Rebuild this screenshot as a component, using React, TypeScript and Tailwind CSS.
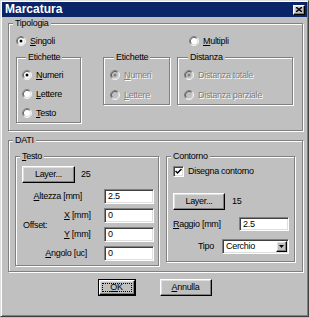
import React from "react";

const disabledText = "text-[#808080] [text-shadow:1px_1px_0_#fff]";

function Radio({ checked, disabled }: { checked?: boolean; disabled?: boolean }) {
  return (
    <svg width="10" height="10" viewBox="0 0 12 12" className="shrink-0">
      <circle cx="6" cy="6" r="4.5" fill={disabled ? "#c0c0c0" : "#fff"} />
      <path d="M2.11 9.89A5.5 5.5 0 0 1 9.89 2.11" fill="none" stroke="#808080" />
      <path d="M9.89 2.11A5.5 5.5 0 0 1 2.11 9.89" fill="none" stroke="#fff" />
      <path d="M2.82 9.18A4.5 4.5 0 0 1 9.18 2.82" fill="none" stroke="#404040" />
      <path d="M9.18 2.82A4.5 4.5 0 0 1 2.82 9.18" fill="none" stroke="#dfdfdf" />
      {checked && <circle cx="6" cy="6" r="1.8" fill={disabled ? "#808080" : "#000"} />}
    </svg>
  );
}

function Option({ label, u, checked, disabled }: any) {
  const rest = label.slice(1);
  return (
    <div className="flex items-center gap-[4px] h-[12px] whitespace-nowrap">
      <Radio checked={checked} disabled={disabled} />
      <span className={disabled ? disabledText : ""}>
        {u ? <span className="underline">{label[0]}</span> : label[0]}
        {rest}
      </span>
    </div>
  );
}

function Group({ label, className, children }: any) {
  return (
    <fieldset className={"border border-[#808080] shadow-[1px_1px_0_#fff,inset_1px_1px_0_#fff] " + className}>
      <legend className="ml-[4px] px-[2px] bg-[#c0c0c0] leading-[11px]">{label}</legend>
      {children}
    </fieldset>
  );
}

function Button({ children, className }: any) {
  return (
    <div
      className={
        "flex items-center justify-center border border-t-white border-l-white border-r-black border-b-black shadow-[inset_-1px_-1px_0_#808080,inset_1px_1px_0_#dfdfdf] " +
        className
      }
    >
      {children}
    </div>
  );
}

function Input({ value, className }: any) {
  return (
    <div
      className={
        "bg-white border border-t-[#808080] border-l-[#808080] border-r-white border-b-white shadow-[inset_1px_1px_0_#404040,inset_-1px_-1px_0_#dfdfdf] pl-[3px] flex items-center " +
        className
      }
    >
      {value}
    </div>
  );
}

export default function App() {
  return (
    <div className="w-[309px] h-[318px] bg-[#c0c0c0] font-['Liberation_Sans',Arial,sans-serif] text-[9px] leading-[11px] tracking-[-0.3px] text-black">
      <div className="w-[309px] h-[317px] border border-t-[#dfdfdf] border-l-[#dfdfdf] border-r-[#404040] border-b-[#404040] shadow-[inset_1px_1px_0_#fff,inset_-1px_-1px_0_#808080] p-[1px]">
        <div className="h-[15px] bg-[#0a2468] flex items-center justify-between pl-[3px] pr-[2px]">
          <span className="text-white font-bold text-[12px] leading-[15px] tracking-normal">Marcatura</span>
          <Button className="w-[12px] h-[10px] bg-[#c0c0c0]">
            <svg width="6" height="5" viewBox="0 0 6 5">
              <path d="M0 0L6 5M6 0L0 5" stroke="#000" strokeWidth="1.4" />
            </svg>
          </Button>
        </div>

        <div className="pl-[6px] mt-[1px]">
          <Group label="Tipologia" className="w-[295px] pb-[7px]">
            <div className="mt-[6px] flex pl-[7px]">
              <div className="w-[173px]">
                <Option label="Singoli" u checked />
              </div>
              <Option label="Multipli" u />
            </div>
            <div className="mt-[5px] flex items-start pl-[7px]">
              <Group label="Etichette" className="w-[65px] pl-[5px] pb-[3px]">
                <div className="mt-[6px] flex flex-col gap-[7px]">
                  <Option label="Numeri" u checked />
                  <Option label="Lettere" u />
                  <Option label="Testo" u />
                </div>
              </Group>
              <Group label="Etichette" className="ml-[22px] w-[67px] pl-[6px] pb-[3px]">
                <div className="mt-[6px] flex flex-col gap-[8px]">
                  <Option label="Numeri" u checked disabled />
                  <Option label="Lettere" u disabled />
                </div>
              </Group>
              <Group label="Distanza" className="ml-[7px] w-[116px] pl-[6px] pb-[3px]">
                <div className="mt-[6px] flex flex-col gap-[8px]">
                  <Option label="Distanza totale" checked disabled />
                  <Option label="Distanza parziale" disabled />
                </div>
              </Group>
            </div>
          </Group>

          <Group label="DATI" className="mt-[4px] w-[295px] pb-[5px]">
            <div className="mt-[5px] flex items-start pl-[6px]">
              <Group
                label={
                  <>
                    <span className="underline">T</span>esto
                  </>
                }
                className="w-[144px] pb-[4px]"
              >
                <div className="mt-[4px] flex items-center">
                  <Button className="ml-[6px] w-[53px] h-[17px]">Layer...</Button>
                  <span className="ml-[6px]">25</span>
                </div>
                <div className="mt-[6px] grid grid-cols-[48px_40px_50px] auto-rows-[15px] gap-y-[4px] items-center whitespace-nowrap">
                  <span className="col-span-2 text-right pr-[22px]">
                    <span className="underline">A</span>ltezza [mm]
                  </span>
                  <Input value="2.5" className="h-[15px]" />
                  <span className="row-span-2 pl-[7px] self-center">Offset:</span>
                  <span className="text-right pr-[15px]">
                    <span className="underline">X</span> [mm]
                  </span>
                  <Input value="0" className="h-[15px]" />
                  <span className="text-right pr-[15px]">
                    <span className="underline">Y</span> [mm]
                  </span>
                  <Input value="0" className="h-[15px]" />
                  <span className="col-span-2 text-right pr-[17px]">
                    <span className="underline">A</span>ngolo [uc]
                  </span>
                  <Input value="0" className="h-[15px]" />
                </div>
              </Group>

              <Group label="Contorno" className="ml-[7px] w-[129px] pb-[7px]">
                <div className="mt-[4px] flex items-center gap-[4px] pl-[6px] h-[11px]">
                  <div className="w-[11px] h-[11px] bg-white border border-t-[#808080] border-l-[#808080] border-r-white border-b-white shadow-[inset_1px_1px_0_#404040,inset_-1px_-1px_0_#dfdfdf] flex items-center justify-center">
                    <svg width="7" height="7" viewBox="0 0 7 7">
                      <path d="M0.5 3L2.5 5L6.5 1" fill="none" stroke="#000" strokeWidth="1.5" />
                    </svg>
                  </div>
                  <span>Disegna contorno</span>
                </div>
                <div className="mt-[16px] flex items-center pl-[6px]">
                  <Button className="w-[52px] h-[17px]">Layer...</Button>
                  <span className="ml-[7px]">15</span>
                </div>
                <div className="mt-[7px] flex items-center pl-[6px]">
                  <span className="w-[66px]">
                    <span className="underline">R</span>aggio [mm]
                  </span>
                  <Input value="2.5" className="w-[50px] h-[14px]" />
                </div>
                <div className="mt-[8px] flex items-center">
                  <span className="ml-[31px] w-[24px]">Tipo</span>
                  <div className="w-[67px] h-[15px] bg-white border border-t-[#808080] border-l-[#808080] border-r-white border-b-white shadow-[inset_1px_1px_0_#404040,inset_-1px_-1px_0_#dfdfdf] flex items-center justify-between pl-[3px] pr-[1px]">
                    <span>Cerchio</span>
                    <Button className="w-[11px] h-[11px] bg-[#c0c0c0]">
                      <svg width="5" height="3" viewBox="0 0 5 3">
                        <path d="M0 0H5L2.5 3Z" fill="#000" />
                      </svg>
                    </Button>
                  </div>
                </div>
              </Group>
            </div>
          </Group>

          <div className="mt-[7px] flex justify-center gap-[24px] pr-[6px]">
            <div className="w-[38px] h-[17px] border border-black">
              <Button className="w-full h-full p-[2px]">
                <div className="w-full h-full border border-dotted border-black flex items-center justify-center">
                  <span>
                    <span className="underline">O</span>K
                  </span>
                </div>
              </Button>
            </div>
            <Button className="w-[52px] h-[17px]">
              <span>
                <span className="underline">A</span>nnulla
              </span>
            </Button>
          </div>
        </div>
      </div>
    </div>
  );
}
